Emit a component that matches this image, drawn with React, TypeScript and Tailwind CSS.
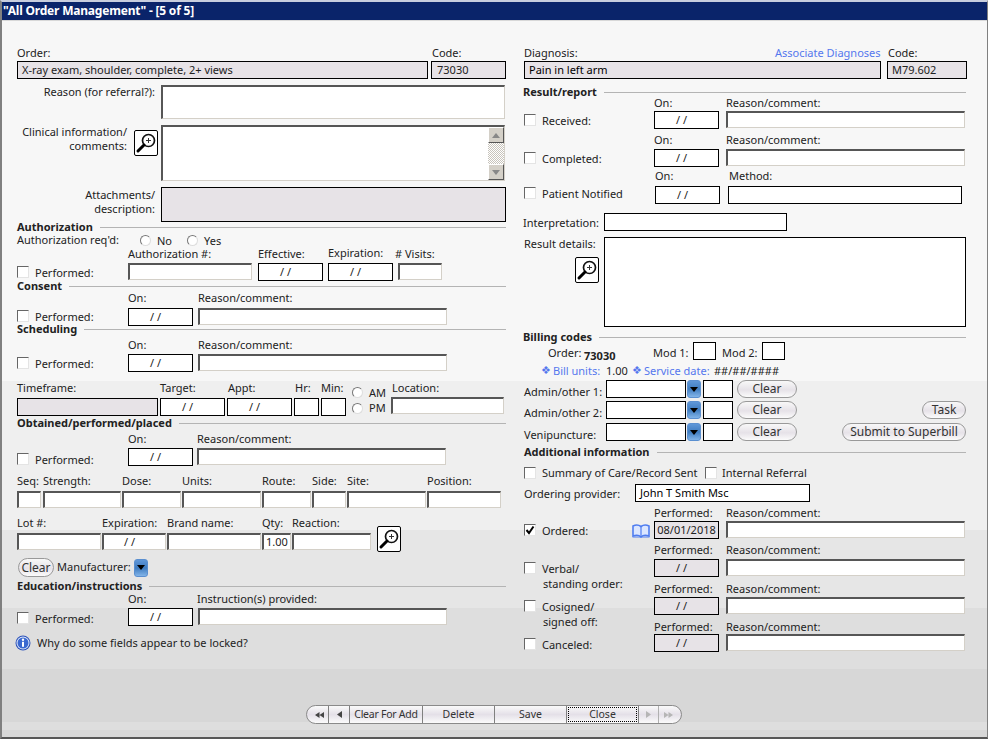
import type { ReactNode } from "react";

const lockedBg = "bg-[#e7e3e7]";

function Flat({ className = "", children }: { className?: string; children?: ReactNode }) {
  return (
    <div className={`flex h-[18px] shrink-0 items-center border border-black bg-white ${className}`}>
      {children}
    </div>
  );
}

function Locked({ className = "", children }: { className?: string; children?: ReactNode }) {
  return (
    <div className={`flex h-[18px] shrink-0 items-center border border-black ${lockedBg} ${className}`}>
      {children}
    </div>
  );
}

function Sunk({ className = "", children }: { className?: string; children?: ReactNode }) {
  return (
    <div
      className={`relative h-[17px] shrink-0 border-t-2 border-r border-b border-l-2 border-t-[#565656] border-r-[#d4d0c8] border-b-[#d4d0c8] border-l-[#565656] bg-white ${className}`}
    >
      {children}
    </div>
  );
}

function DateBox({ className = "", locked = false, value }: { className?: string; locked?: boolean; value?: string }) {
  const cls = `w-[65px] justify-center ${value ? "" : "pr-[10px]"} ${className}`;
  return locked ? <Locked className={cls}>{value ?? "/ /"}</Locked> : <Flat className={cls}>/ /</Flat>;
}

function Heading({ children, className = "" }: { children: ReactNode; className?: string }) {
  return (
    <div className={`flex items-center ${className}`}>
      <span className="leading-[10px] font-bold whitespace-nowrap">{children}</span>
      <div className="ml-[7px] h-px flex-1 bg-[#b4b4b4]" />
    </div>
  );
}

function Checkbox({ checked = false }: { checked?: boolean }) {
  return (
    <div className="flex h-[12px] w-[12px] shrink-0 items-center justify-center border border-t-[#666] border-r-[#e4e4e4] border-b-[#e4e4e4] border-l-[#666] bg-white">
      {checked && (
        <svg viewBox="0 0 10 10" className="h-[10px] w-[10px]">
          <path d="M1.5 5 L4 8 L8.5 1.5" fill="none" stroke="#000" strokeWidth="2" />
        </svg>
      )}
    </div>
  );
}

function CheckLabel({
  className = "",
  checked = false,
  children,
}: {
  className?: string;
  checked?: boolean;
  children: ReactNode;
}) {
  return (
    <div className={`flex h-[18px] shrink-0 ${className}`}>
      <div className="h-[12px] w-[12px] shrink-0">
        <Checkbox checked={checked} />
      </div>
      <span className="ml-[6px] -mt-px leading-[15px] whitespace-nowrap">{children}</span>
    </div>
  );
}

function Radio() {
  return (
    <div className="h-[11px] w-[11px] shrink-0 rounded-full border border-t-[#777] border-r-[#ddd] border-b-[#ddd] border-l-[#777] bg-white" />
  );
}

function Magnifier({ className = "" }: { className?: string }) {
  return (
    <div className={`flex h-[26px] w-[24px] shrink-0 items-center justify-center rounded-[2px] border border-black bg-white ${className}`}>
      <svg viewBox="0 0 22 24" className="h-[24px] w-[22px]">
        <circle cx="13.5" cy="9.5" r="6" fill="#fff" stroke="#111" strokeWidth="1.7" />
        <path d="M13.5 7v5M11 9.5h5" stroke="#333" strokeWidth="1" />
        <path d="M9 14 L3 20" stroke="#000" strokeWidth="3" strokeLinecap="round" />
      </svg>
    </div>
  );
}

function Dropdown({ className = "" }: { className?: string }) {
  return (
    <div
      className={`flex h-[18px] w-[14px] shrink-0 items-center justify-center rounded-[3px] border border-[#5a8fd0] bg-[linear-gradient(#5f97d8,#3f7cc0_50%,#82b4e8)] ${className}`}
    >
      <svg viewBox="0 0 8 5" className="h-[5px] w-[8px]">
        <path d="M0 0h8L4 5z" fill="#000" />
      </svg>
    </div>
  );
}

function Pill({ className = "", children }: { className?: string; children: ReactNode }) {
  return (
    <div
      className={`flex shrink-0 items-center justify-center rounded-full border border-[#999] bg-[linear-gradient(#f8f8f8,#e6e2e8_55%,#fbfbfb)] text-[12px] text-[#333] ${className}`}
    >
      {children}
    </div>
  );
}

function Col({ label, head, className, children }: { label?: string; head: string; className: string; children: ReactNode }) {
  return (
    <div className={`flex shrink-0 flex-col ${className}`}>
      <div className={`whitespace-nowrap leading-[14px] ${head}`}>{label}</div>
      {children}
    </div>
  );
}

function ReasonRow({
  on = "On:",
  check,
  locked = false,
  value,
  head,
}: {
  on?: string;
  check: ReactNode;
  locked?: boolean;
  value?: string;
  head: string;
}) {
  return (
    <>
      <div className={`flex leading-[14px] ${head}`}>
        <span className="ml-[130px] w-[72px]">{on}</span>
        <span>Reason/comment:</span>
      </div>
      <div className="flex h-[18px]">
        {check}
        <DateBox locked={locked} value={value} />
        <Sunk className="ml-[7px] w-[239px]" />
      </div>
    </>
  );
}

const SEQ_FIELDS = [
  { label: "Seq:", cls: "w-[24px]" },
  { label: "Strength:", cls: "ml-[2px] w-[78px]" },
  { label: "Dose:", cls: "ml-px w-[59px]" },
  { label: "Units:", cls: "ml-px w-[79px]" },
  { label: "Route:", cls: "ml-px w-[49px]" },
  { label: "Side:", cls: "ml-px w-[34px]" },
  { label: "Site:", cls: "ml-px w-[79px]" },
  { label: "Position:", cls: "ml-px w-[74px]" },
];

const LOT_FIELDS = [
  { label: "Lot #:", cls: "w-[84px]" },
  { label: "Expiration:", cls: "ml-px w-[64px]", date: true },
  { label: "Brand name:", cls: "ml-px w-[94px]" },
  { label: "Qty:", cls: "ml-px w-[29px]", value: "1.00" },
  { label: "Reaction:", cls: "ml-px w-[79px]" },
];

const ADMIN_ROWS = [
  { label: "Admin/other 1:", cls: "", extra: null },
  { label: "Admin/other 2:", cls: "mt-[3px]", extra: <Pill className="mr-px ml-auto h-[18px] w-[44px]">Task</Pill> },
  { label: "Venipuncture:", cls: "mt-[4px]", extra: <Pill className="mr-px ml-auto h-[18px] w-[124px]">Submit to Superbill</Pill> },
];

const FOOTER_BTNS = [
  { text: "Clear For Add", cls: "w-[73px] tracking-[-0.25px]" },
  { text: "Delete", cls: "w-[72px]" },
  { text: "Save", cls: "w-[72px]" },
];

function LeftColumn() {
  return (
    <div className="ml-[15px] w-[489px] shrink-0">
      <div className="flex h-[15px] leading-[14px]">
        <span className="w-[415px]">Order:</span>
        <span>Code:</span>
      </div>
      <div className="flex">
        <Locked className="w-[411px] pl-[4px]">X-ray exam, shoulder, complete, 2+ views</Locked>
        <Locked className="ml-[3px] w-[75px] pl-[5px]">73030</Locked>
      </div>
      <div className="mt-[6px] flex">
        <div className="w-[138px] text-right leading-[14px]">Reason (for referral?):</div>
        <Sunk className="ml-[6px] h-[34px] w-[344px]" />
      </div>
      <div className="mt-[6px] flex">
        <div className="w-[110px] text-right leading-[14px]">
          Clinical information/
          <br />
          comments:
        </div>
        <Magnifier className="mt-[5px] ml-[7px]" />
        <Sunk className="ml-[3px] h-[56px] w-[344px]">
          <div className="absolute top-0 right-0 flex h-full w-[16px] flex-col bg-[repeating-conic-gradient(#c8c4bc_0_25%,#fff_0_50%)] bg-[length:2px_2px]">
            <div className="flex h-[16px] items-center justify-center border border-t-white border-r-[#555] border-b-[#555] border-l-white bg-[#d4d0c8]">
              <svg viewBox="0 0 8 5" className="h-[5px] w-[8px]">
                <path d="M4 0l4 5H0z" fill="#888" />
              </svg>
            </div>
            <div className="mt-auto flex h-[16px] items-center justify-center border border-t-white border-r-[#555] border-b-[#555] border-l-white bg-[#d4d0c8]">
              <svg viewBox="0 0 8 5" className="h-[5px] w-[8px]">
                <path d="M0 0h8L4 5z" fill="#888" />
              </svg>
            </div>
          </div>
        </Sunk>
      </div>
      <div className="mt-[6px] flex">
        <div className="w-[138px] pt-px text-right leading-[14px]">
          Attachments/
          <br />
          description:
        </div>
        <div className={`ml-[6px] h-[35px] w-[345px] border border-black ${lockedBg}`} />
      </div>

      <Heading className="h-[10px]">Authorization</Heading>
      <div className="mt-px flex h-[14px] items-center leading-[14px]">
        <span className="w-[123px]">Authorization req'd:</span>
        <Radio />
        <span className="ml-[6px] w-[30px] pt-px">No</span>
        <Radio />
        <span className="ml-[6px] pt-px">Yes</span>
      </div>
      <div className="flex h-[16px] leading-[14px]">
        <span className="ml-[111px] w-[130px]">Authorization #:</span>
        <span className="w-[70px]">Effective:</span>
        <span className="w-[67px] -mt-px">Expiration:</span>
        <span># Visits:</span>
      </div>
      <div className="flex h-[18px]">
        <CheckLabel className="w-[111px] pt-[3px]">Performed:</CheckLabel>
        <Sunk className="w-[124px]" />
        <DateBox className="ml-[6px]" />
        <DateBox className="ml-[5px]" />
        <Sunk className="ml-[5px] w-[44px]" />
      </div>

      <Heading className="h-[10px]">Consent</Heading>
      <div className="flex h-[17px] leading-[14px]">
        <span className="ml-[111px] w-[70px]">On:</span>
        <span>Reason/comment:</span>
      </div>
      <div className="flex h-[18px]">
        <CheckLabel className="w-[111px] pt-[2px]">Performed:</CheckLabel>
        <DateBox />
        <Sunk className="ml-[5px] w-[249px]" />
      </div>

      <Heading className="h-[6px]">Scheduling</Heading>
      <div className="flex h-[22px] pt-[6px] leading-[14px]">
        <span className="ml-[111px] w-[70px]">On:</span>
        <span>Reason/comment:</span>
      </div>
      <div className="flex h-[18px]">
        <CheckLabel className="w-[111px] pt-[3px]">Performed:</CheckLabel>
        <DateBox />
        <Sunk className="ml-[5px] w-[249px]" />
      </div>

      <div className="flex h-[44px]">
        <Col label="Timeframe:" head="h-[26px] pt-[9px]" className="w-[141px]">
          <div className={`h-[18px] border border-black ${lockedBg}`} />
        </Col>
        <Col label="Target:" head="h-[26px] pt-[9px]" className="ml-[2px] w-[65px]">
          <DateBox />
        </Col>
        <Col label="Appt:" head="h-[26px] pt-[9px] pl-px" className="ml-[2px] w-[65px]">
          <DateBox />
        </Col>
        <Col label="Hr:" head="h-[26px] pt-[9px] pl-px" className="ml-[2px] w-[25px]">
          <Flat />
        </Col>
        <Col label="Min:" head="h-[26px] pt-[9px]" className="ml-[2px] w-[25px]">
          <Flat />
        </Col>
        <div className="ml-[6px] flex w-[39px] shrink-0 flex-col pt-[13px] leading-[14px]">
          <div className="flex h-[16px] items-center">
            <Radio />
            <span className="ml-[6px]">AM</span>
          </div>
          <div className="flex h-[16px] items-center">
            <Radio />
            <span className="ml-[6px]">PM</span>
          </div>
        </div>
        <Col label="Location:" head="h-[25px] pt-[9px] pl-px" className="w-[113px]">
          <Sunk className="w-[113px]" />
        </Col>
      </div>

      <Heading className="h-[14px]">Obtained/performed/placed</Heading>
      <div className="flex h-[18px] pt-[2px] leading-[14px]">
        <span className="ml-[111px] w-[69px]">On:</span>
        <span>Reason/comment:</span>
      </div>
      <div className="flex h-[18px]">
        <CheckLabel className="w-[111px] pt-[5px]">Performed:</CheckLabel>
        <DateBox />
        <Sunk className="ml-[4px] w-[249px]" />
      </div>

      <div className="flex">
        {SEQ_FIELDS.map((f) => (
          <Col key={f.label} label={f.label} head="h-[25px] pt-[8px]" className={f.cls}>
            <Sunk className="w-full" />
          </Col>
        ))}
      </div>
      <div className="flex">
        {LOT_FIELDS.map((f) => (
          <Col key={f.label} label={f.label} head="h-[25px] pt-[8px]" className={f.cls}>
            <Sunk className="flex w-full items-center justify-center leading-[14px]">
              {f.date ? <span className="pr-[10px]">/ /</span> : f.value}
            </Sunk>
          </Col>
        ))}
        <Magnifier className="mt-[18px] ml-[6px]" />
      </div>
      <div className="mt-[6px] flex h-[19px] items-center">
        <Pill className="ml-px h-[19px] w-[36px]">Clear</Pill>
        <span className="ml-[3px] w-[77px]">Manufacturer:</span>
        <Dropdown />
      </div>

      <Heading className="mt-[4px] h-[10px]">Education/instructions</Heading>
      <div className="flex h-[17px] pt-px leading-[14px]">
        <span className="ml-[111px] w-[69px]">On:</span>
        <span>Instruction(s) provided:</span>
      </div>
      <div className="flex h-[18px]">
        <CheckLabel className="w-[111px] pt-[4px]">Performed:</CheckLabel>
        <DateBox />
        <Sunk className="ml-[5px] w-[249px]" />
      </div>
      <div className="mt-[9px] -ml-[2px] flex h-[16px] items-center">
        <svg viewBox="0 0 16 16" className="h-[16px] w-[16px]">
          <circle cx="8" cy="8" r="7.5" fill="#2a50b8" />
          <circle cx="8" cy="8" r="6.5" fill="#dfe8fa" />
          <circle cx="8" cy="8" r="5.5" fill="#3a68d0" />
          <circle cx="8" cy="4.8" r="1.2" fill="#fff" />
          <rect x="7" y="6.8" width="2" height="5" fill="#fff" />
        </svg>
        <span className="ml-[6px]">Why do some fields appear to be locked?</span>
      </div>
    </div>
  );
}

function RightColumn() {
  return (
    <div className="ml-[18px] w-[443px] shrink-0">
      <div className="flex h-[15px] leading-[14px]">
        <span className="w-[251px]">Diagnosis:</span>
        <span className="w-[113px] text-[#5577ee]">Associate Diagnoses</span>
        <span>Code:</span>
      </div>
      <div className="flex">
        <Locked className="w-[357px] pl-[4px] text-black">Pain in left arm</Locked>
        <Locked className="ml-[6px] w-[80px] pl-[4px]">M79.602</Locked>
      </div>

      <Heading className="mt-[9px] mr-px -ml-px h-[8px]">Result/report</Heading>
      <ReasonRow head="h-[15px]" check={<CheckLabel className="w-[130px] pt-[3px]">Received:</CheckLabel>} />
      <ReasonRow head="h-[20px] pt-[4px]" check={<CheckLabel className="w-[130px] pt-[3px]">Completed:</CheckLabel>} />
      <div className="flex h-[19px] pt-[2px] leading-[14px]">
        <span className="ml-[131px] w-[74px]">On:</span>
        <span>Method:</span>
      </div>
      <div className="flex h-[18px]">
        <CheckLabel className="w-[131px] pt-px">Patient Notified</CheckLabel>
        <DateBox />
        <Flat className="ml-[8px] w-[234px]" />
      </div>
      <div className="mt-[9px] flex items-center leading-[14px]">
        <span className="-ml-px w-[81px] pt-px">Interpretation:</span>
        <Flat className="w-[183px]" />
      </div>
      <div className="mt-[6px] flex">
        <div className="w-[80px] shrink-0">
          <div className="leading-[14px]">Result details:</div>
          <Magnifier className="mt-[6px] ml-[51px]" />
        </div>
        <div className="h-[90px] w-[362px] border border-black bg-white" />
      </div>

      <Heading className="mt-[5px] mr-px -ml-px h-[10px]">Billing codes</Heading>
      <div className="flex h-[18px] items-center leading-[14px]">
        <span className="ml-[24px] w-[36px] pt-[4px]">Order:</span>
        <span className="w-[69px] pt-[10px] font-bold">73030</span>
        <span className="w-[40px] pt-[4px]">Mod 1:</span>
        <Flat className="w-[23px]" />
        <span className="ml-[6px] w-[40px] pt-[4px]">Mod 2:</span>
        <Flat className="w-[23px]" />
      </div>
      <div className="mt-[4px] flex h-[14px] items-center leading-[14px] text-[#5577ee]">
        <span className="ml-[17px] w-[12px] font-['DejaVu_Sans'] text-[11px]">❖</span>
        <span className="w-[53px]">Bill units:</span>
        <span className="w-[26px] text-[#222]">1.00</span>
        <span className="w-[12px] font-['DejaVu_Sans'] text-[11px]">❖</span>
        <span className="w-[70px]">Service date:</span>
        <span className="text-[#222]">##/##/####</span>
      </div>

      <div className="mt-[2px]">
        {ADMIN_ROWS.map((r) => (
          <div key={r.label} className={`flex h-[18px] ${r.cls}`}>
            <span className="w-[82px] pt-[5px] leading-[14px]">{r.label}</span>
            <Flat className="w-[80px]" />
            <Dropdown className="ml-px" />
            <Flat className="ml-[2px] w-[30px]" />
            <Pill className="ml-[4px] h-[18px] w-[60px]">Clear</Pill>
            {r.extra}
          </div>
        ))}
      </div>

      <Heading className="mt-[6px] mr-px h-[10px]">Additional information</Heading>
      <div className="mt-[9px] flex h-[14px] items-center leading-[14px]">
        <div className="flex w-[181px] items-center">
          <Checkbox />
          <span className="ml-[6px]">Summary of Care/Record Sent</span>
        </div>
        <Checkbox />
        <span className="ml-[5px]">Internal Referral</span>
      </div>
      <div className="mt-[4px] flex items-center leading-[14px]">
        <span className="w-[111px] pt-[2px]">Ordering provider:</span>
        <Flat className="w-[175px] pl-[4px] text-black">John T Smith Msc</Flat>
      </div>

      <ReasonRow
        on="Performed:"
        head="h-[19px] pt-[4px]"
        locked
        value="08/01/2018"
        check={
          <div className="relative w-[130px]">
            <CheckLabel className="pt-[3px]" checked>
              Ordered:
            </CheckLabel>
            <svg viewBox="0 0 18 14" className="absolute top-[3px] left-[108px] h-[14px] w-[18px]">
              <path d="M1 2c3-1.500 6-1 8 .5 2-1.500 5-2 8-.5v10c-3-1-6-1-8 1-2-2-5-2-8-1z" fill="#dbe6ff" stroke="#4f7df0" strokeWidth="1.600" />
              <path d="M9 2.500v10.500" stroke="#4f7df0" strokeWidth="1.200" />
              <path d="M0.500 13h17" stroke="#4f7df0" strokeWidth="1" />
            </svg>
          </div>
        }
      />
      <ReasonRow
        on="Performed:"
        head="h-[20px] pt-[4px]"
        locked
        check={
          <CheckLabel className="w-[130px] pt-[3px]">
            Verbal/
            <br />
            <span className="pl-px">standing order:</span>
          </CheckLabel>
        }
      />
      <ReasonRow
        on="Performed:"
        head="h-[20px] pt-[5px]"
        locked
        check={
          <CheckLabel className="w-[130px] pt-[3px]">
            Cosigned/
            <br />
            <span className="pl-px">signed off:</span>
          </CheckLabel>
        }
      />
      <ReasonRow
        on="Performed:"
        head="h-[19px] pt-[5px]"
        locked
        check={<CheckLabel className="w-[130px] pt-[4px]">Canceled:</CheckLabel>}
      />
    </div>
  );
}

export default function App() {
  return (
    <div className="flex h-[739px] w-[988px] flex-col overflow-hidden border-t-2 border-r border-b-2 border-l-2 border-t-[#c8cede] border-r-[#808080] border-b-[#555] border-l-[#808080] bg-white font-['Noto_Sans',sans-serif] text-[11px] text-[#222]">
      <div className="flex h-[18px] shrink-0 items-center bg-[#0a246a] pl-px text-[12px] leading-none font-bold tracking-[-0.2px] text-white">
        "All Order Management" - [5 of 5]
      </div>
      <div className="flex flex-1 flex-col border-t border-[#d8d8d8] bg-[linear-gradient(#f7f7f7_0_360px,#efefef_360px_509px,#e6e6e6_509px_587px,#dedede_587px_648px,#d7d7d7_648px_701px,#dedede_701px_709px,#d7d7d7_709px)] pt-[25px]">
        <div className="flex">
          <LeftColumn />
          <RightColumn />
        </div>
        <div className="mt-auto flex justify-center pr-px pb-[13px]">
          <div className="flex h-[19px] w-[376px] items-stretch overflow-hidden rounded-full border border-[#8a8a8a] bg-[linear-gradient(#fafafa,#e4e0e8_50%,#fbfbfb)] text-[10.5px] text-[#333]">
            <div className="flex w-[22px] items-center justify-center border-r border-[#808080] pl-[3px]">
              <svg viewBox="0 0 9 6" className="h-[6px] w-[9px]">
                <path d="M4.500 0v6L0 3zM9 0v6L4.500 3z" fill="#444" />
              </svg>
            </div>
            <div className="flex w-[21px] items-center justify-center border-r border-[#808080]">
              <svg viewBox="0 0 5 7" className="h-[7px] w-[5px]">
                <path d="M5 0v7L0 3.500z" fill="#444" />
              </svg>
            </div>
            {FOOTER_BTNS.map((b) => (
              <div key={b.text} className={`flex items-center justify-center border-r border-[#808080] ${b.cls}`}>
                {b.text}
              </div>
            ))}
            <div className="flex w-[72px] items-center justify-center border-r border-[#808080]">
              <div className="m-px flex h-[15px] w-full items-center justify-center border border-dotted border-black">Close</div>
            </div>
            <div className="flex w-[20px] items-center justify-center border-r border-[#b0b0b0]">
              <svg viewBox="0 0 5 7" className="h-[7px] w-[5px]">
                <path d="M0 0v7l5-3.500z" fill="#b5b5b5" />
              </svg>
            </div>
            <div className="flex flex-1 items-center justify-center pr-[3px]">
              <svg viewBox="0 0 9 6" className="h-[6px] w-[9px]">
                <path d="M0 0v6l4.500-3zM4.500 0v6L9 3z" fill="#b5b5b5" />
              </svg>
            </div>
          </div>
        </div>
      </div>
    </div>
  );
}
